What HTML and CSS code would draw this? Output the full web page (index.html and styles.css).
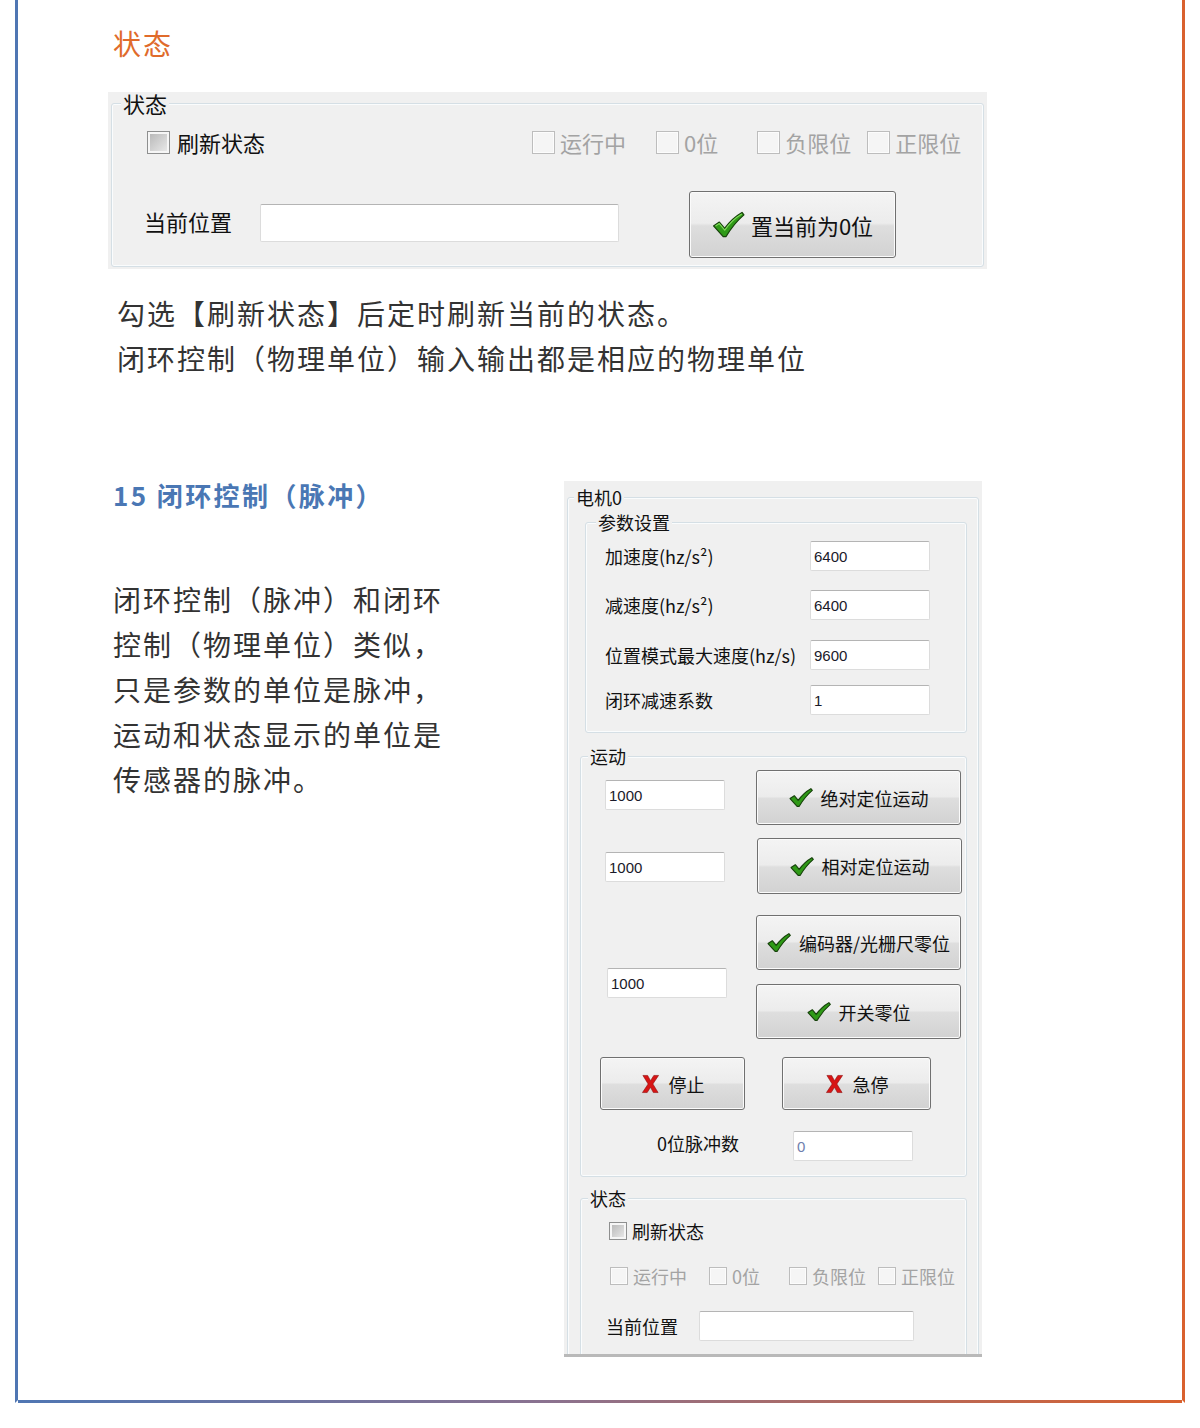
FILE: index.html
```html
<!DOCTYPE html>
<html lang="zh-CN">
<head>
<meta charset="utf-8">
<title>闭环控制（脉冲）</title>
<link rel="stylesheet" href="styles.css">
</head>
<body>
<div class="frame">
  <div class="content">
    <h2 class="title-orange">状态</h2>

    <div class="win win-status">
      <fieldset class="grp grp-lg">
        <legend>状态</legend>
        <div class="st-row1">
          <div class="chk"><span class="box box-on"></span><span>刷新状态</span></div>
          <div class="flags">
            <div class="chk dis f1"><span class="box"></span><span>运行中</span></div>
            <div class="chk dis f2"><span class="box"></span><span>0位</span></div>
            <div class="chk dis f3"><span class="box"></span><span>负限位</span></div>
            <div class="chk dis f4"><span class="box"></span><span>正限位</span></div>
          </div>
        </div>
        <div class="st-row2">
          <span class="lbl">当前位置</span>
          <span class="inp inp-wide"></span>
          <div class="btn btn-lg">
            <svg class="ico-check-lg" viewBox="0 0 34 28"><path d="M1.5 15.5 L7.5 11.5 L13 18 C18 11 24 5.5 31 1.5 L33 4 C26 10 19.5 18 14.5 26.5 L11.5 26.5 Z" fill="#2f9a17" stroke="#17420b" stroke-width="1.3" stroke-linejoin="round"/><path d="M3.5 15.6 L7.4 13 L13.1 19.8 C18.5 12 24 7 30.8 3" fill="none" stroke="#7fd85a" stroke-width="1.2"/></svg>
            <span>置当前为0位</span>
          </div>
        </div>
      </fieldset>
    </div>

    <p class="para para-top">勾选【刷新状态】后定时刷新当前的状态。<br>闭环控制（物理单位）输入输出都是相应的物理单位</p>

    <div class="sec">
      <div class="sec-left">
        <h2 class="title-blue">15 闭环控制（脉冲）</h2>
        <p class="para para-left">闭环控制（脉冲）和闭环控制（物理单位）类似，只是参数的单位是脉冲，运动和状态显示的单位是传感器的脉冲。</p>
      </div>

      <div class="win win-motor">
        <fieldset class="grp grp-motor">
          <legend>电机0</legend>

          <fieldset class="grp grp-param">
            <legend>参数设置</legend>
            <div class="prow pr1"><span class="plbl">加速度(hz/s²)</span><span class="inp inp-s">6400</span></div>
            <div class="prow pr2"><span class="plbl">减速度(hz/s²)</span><span class="inp inp-s">6400</span></div>
            <div class="prow pr3"><span class="plbl">位置模式最大速度(hz/s)</span><span class="inp inp-s">9600</span></div>
            <div class="prow pr4"><span class="plbl">闭环减速系数</span><span class="inp inp-s">1</span></div>
          </fieldset>

          <fieldset class="grp grp-move">
            <legend>运动</legend>
            <div class="move-top">
              <div class="mcol-in">
                <span class="inp inp-s mi1">1000</span>
                <span class="inp inp-s mi2">1000</span>
                <span class="inp inp-s mi3">1000</span>
              </div>
              <div class="mcol-btn">
                <div class="btn btn-m mb1"><svg class="ico-check" viewBox="0 0 34 28"><path d="M1.5 15.5 L7.5 11.5 L13 18 C18 11 24 5.5 31 1.5 L33 4 C26 10 19.5 18 14.5 26.5 L11.5 26.5 Z" fill="#2f9a17" stroke="#17420b" stroke-width="1.6" stroke-linejoin="round"/></svg><span>绝对定位运动</span></div>
                <div class="btn btn-m mb2"><svg class="ico-check" viewBox="0 0 34 28"><path d="M1.5 15.5 L7.5 11.5 L13 18 C18 11 24 5.5 31 1.5 L33 4 C26 10 19.5 18 14.5 26.5 L11.5 26.5 Z" fill="#2f9a17" stroke="#17420b" stroke-width="1.6" stroke-linejoin="round"/></svg><span>相对定位运动</span></div>
                <div class="btn btn-m mb3"><svg class="ico-check" viewBox="0 0 34 28"><path d="M1.5 15.5 L7.5 11.5 L13 18 C18 11 24 5.5 31 1.5 L33 4 C26 10 19.5 18 14.5 26.5 L11.5 26.5 Z" fill="#2f9a17" stroke="#17420b" stroke-width="1.6" stroke-linejoin="round"/></svg><span>编码器/光栅尺零位</span></div>
                <div class="btn btn-m mb4"><svg class="ico-check" viewBox="0 0 34 28"><path d="M1.5 15.5 L7.5 11.5 L13 18 C18 11 24 5.5 31 1.5 L33 4 C26 10 19.5 18 14.5 26.5 L11.5 26.5 Z" fill="#2f9a17" stroke="#17420b" stroke-width="1.6" stroke-linejoin="round"/></svg><span>开关零位</span></div>
              </div>
            </div>
            <div class="move-stop">
              <div class="btn btn-stop"><svg class="ico-x" viewBox="0 0 20 20"><path d="M2 1 H7 L10 6.5 L13.5 1 H18.5 L12.5 10 L18 19 H13 L10 13.5 L6.5 19 H1.5 L7.5 10 Z" fill="#d71515" stroke="#8a0b0b" stroke-width="0.6"/></svg><span>停止</span></div>
              <div class="btn btn-estop"><svg class="ico-x" viewBox="0 0 20 20"><path d="M2 1 H7 L10 6.5 L13.5 1 H18.5 L12.5 10 L18 19 H13 L10 13.5 L6.5 19 H1.5 L7.5 10 Z" fill="#d71515" stroke="#8a0b0b" stroke-width="0.6"/></svg><span>急停</span></div>
            </div>
            <div class="move-pulse">
              <span class="pulse-lbl">0位脉冲数</span>
              <span class="inp inp-s inp-ro">0</span>
            </div>
          </fieldset>

          <fieldset class="grp grp-st2">
            <legend>状态</legend>
            <div class="s2-row1">
              <div class="chk chk-sm"><span class="box box-on"></span><span>刷新状态</span></div>
            </div>
            <div class="s2-row2">
              <div class="chk chk-sm dis g1"><span class="box"></span><span>运行中</span></div>
              <div class="chk chk-sm dis g2"><span class="box"></span><span>0位</span></div>
              <div class="chk chk-sm dis g3"><span class="box"></span><span>负限位</span></div>
              <div class="chk chk-sm dis g4"><span class="box"></span><span>正限位</span></div>
            </div>
            <div class="s2-row3">
              <span class="s2-lbl">当前位置</span>
              <span class="inp inp-pos"></span>
            </div>
          </fieldset>
        </fieldset>
      </div>
    </div>
  </div>
</div>
</body>
</html>
```

FILE: styles.css
```css
html, body {
  margin: 0;
  padding: 0;
  background: #ffffff;
}

body {
  font-family: "Noto Sans CJK SC", "Noto Sans", sans-serif;
  color: #333333;
}

.frame {
  margin-left: 15px;
  width: 1170px;
  height: 1403px;
  box-sizing: border-box;
  border-left: 3px solid #4f76b3;
  border-right: 3px solid #d9612e;
  border-bottom: 3px solid transparent;
  background:
    linear-gradient(#ffffff, #ffffff) padding-box,
    linear-gradient(90deg, #4f76b3, #8a7290 45%, #d9612e) border-box;
}

.content {
  padding-left: 90px;
}

.title-orange {
  margin: 0;
  padding: 23px 0 0 5px;
  font-size: 28px;
  line-height: 40px;
  letter-spacing: 2px;
  font-weight: normal;
  color: #e06b2b;
}

.title-blue {
  margin: 0;
  font-size: 26px;
  line-height: 40px;
  letter-spacing: 2.4px;
  font-weight: bold;
  color: #4a77b4;
}

.para {
  margin: 0;
  font-size: 28px;
  line-height: 45px;
  letter-spacing: 2px;
  color: #333333;
}

.para-top {
  margin-top: 22px;
  padding-left: 9px;
}

.para-left {
  margin-top: 62px;
  width: 340px;
}

.sec {
  display: flex;
  align-items: flex-start;
  margin-top: 94px;
}

.sec-left {
  width: 456px;
  box-sizing: border-box;
  padding-left: 5px;
}

/* ---------- window panels ---------- */

.win {
  background: #f0f0f0;
  box-sizing: border-box;
  color: #111111;
}

.grp {
  margin: 0;
  padding: 0;
  min-width: 0;
  border: 1px solid #d5dfe5;
  border-radius: 3px;
  box-shadow: inset 0 0 0 1px #fafcfd;
}

.grp > legend {
  padding: 0 2px;
  background: #f0f0f0;
  color: #111111;
}

.inp {
  display: flex;
  align-items: center;
  box-sizing: border-box;
  background: #ffffff;
  border: 1px solid #dcdcdc;
  border-top-color: #b4b4b4;
  border-radius: 2px;
  font-family: "Liberation Sans", "DejaVu Sans", sans-serif;
  font-size: 15px;
  color: #1a1a2a;
  padding-left: 3px;
}

.btn {
  display: flex;
  align-items: center;
  justify-content: center;
  box-sizing: border-box;
  border: 1px solid #707070;
  border-radius: 3px;
  background: linear-gradient(#f4f4f4 0%, #ececec 48%, #dedede 52%, #d2d2d2 100%);
  box-shadow: inset 0 0 0 1px #fbfbfb;
  color: #111111;
}

.chk {
  display: flex;
  align-items: center;
  gap: 5px;
}

.box {
  display: block;
  box-sizing: border-box;
  width: 23px;
  height: 23px;
  border: 1px solid #bdbdbd;
  background: #f5f5f5;
  box-shadow: inset 0 0 0 1px #fcfcfc;
}

.box-on {
  border-color: #8e8f8f;
  background: linear-gradient(135deg, #b4b4b4, #ededed);
  box-shadow: inset 0 0 0 2px #f6f6f6;
}

.dis {
  color: #a3a3a3;
}

/* ---------- panel 1: 状态 ---------- */

.win-status {
  width: 879px;
  height: 177px;
  margin-top: 29px;
  padding: 0 3px;
  font-size: 22px;
}

.grp-lg > legend {
  margin-left: 9px;
  font-size: 22px;
  line-height: 22px;
}

.st-row1 {
  display: flex;
  align-items: center;
  height: 30px;
  margin-top: 13px;
  padding-left: 35px;
}

.st-row1 > .chk {
  gap: 7px;
}

.flags {
  display: flex;
  align-items: center;
  margin-left: 267px;
}

.flags .f2 { margin-left: 30px; }
.flags .f3 { margin-left: 39px; }
.flags .f4 { margin-left: 16px; }

.st-row2 {
  display: flex;
  align-items: center;
  height: 67px;
  margin-top: 34px;
  margin-bottom: 8px;
  padding-left: 32px;
}

.lbl {
  margin-bottom: 8px;
}

.inp-wide {
  width: 359px;
  height: 38px;
  margin-left: 28px;
  margin-bottom: 3px;
}

.btn-lg {
  width: 207px;
  height: 67px;
  margin-left: 70px;
  gap: 6px;
  font-size: 22px;
}

.ico-check-lg {
  width: 33px;
  height: 27px;
}

/* ---------- panel 2: 电机0 ---------- */

.win-motor {
  width: 418px;
  height: 876px;
  margin-top: 6px;
  padding: 6px 3px 0;
  border-bottom: 3px solid #b9b9b9;
  overflow: hidden;
  font-size: 18px;
}

.grp-motor > legend {
  margin-left: 6px;
  font-size: 18px;
  line-height: 20px;
}

.grp-param,
.grp-move,
.grp-st2 {
  margin-right: 11px;
}

.grp-param > legend,
.grp-move > legend,
.grp-st2 > legend {
  font-size: 18px;
  line-height: 20px;
}

.grp-param {
  margin-top: 5px;
  margin-left: 17px;
  padding: 0 0 17px 19px;
}

.grp-param > legend {
  margin-left: -9px;
}

.prow {
  display: flex;
  align-items: center;
  height: 30px;
}

.pr1 { margin-top: 9px; }
.pr2 { margin-top: 19px; }
.pr3 { margin-top: 20px; }
.pr4 { margin-top: 15px; }

.plbl {
  width: 205px;
  white-space: nowrap;
}

.inp-s {
  width: 120px;
  height: 30px;
}

.grp-move {
  margin-top: 13px;
  margin-left: 12px;
  padding: 0 0 14px 0;
}

.grp-move > legend,
.grp-st2 > legend {
  margin-left: 7px;
}

.move-top {
  display: flex;
  align-items: flex-start;
}

.mcol-in {
  display: flex;
  flex-direction: column;
  padding-left: 24px;
  width: 122px;
}

.mi1 { margin-top: 14px; }
.mi2 { margin-top: 42px; }
.mi3 { margin-top: 86px; margin-left: 2px; }

.mcol-btn {
  display: flex;
  flex-direction: column;
  margin-left: 29px;
}

.btn-m {
  width: 205px;
  height: 55px;
  gap: 8px;
  font-size: 18px;
}

.mb1 { margin-top: 4px; }
.mb2 { margin-top: 13px; margin-left: 1px; height: 56px; }
.mb3 { margin-top: 21px; }
.mb4 { margin-top: 14px; }

.ico-check {
  width: 24px;
  height: 21px;
}

.move-stop {
  display: flex;
  margin-top: 18px;
  padding-left: 19px;
}

.btn-stop,
.btn-estop {
  height: 53px;
  gap: 9px;
  font-size: 18px;
}

.btn-stop { width: 145px; }
.btn-estop { width: 149px; margin-left: 37px; }

.ico-x {
  width: 19px;
  height: 20px;
}

.move-pulse {
  display: flex;
  align-items: center;
  margin-top: 20px;
}

.pulse-lbl {
  width: 136px;
  margin-left: 76px;
  margin-bottom: 6px;
}

.inp-ro {
  color: #6f7fae;
}

.grp-st2 {
  margin-top: 11px;
  margin-left: 12px;
  padding: 0 0 30px 0;
}

.chk-sm .box {
  width: 18px;
  height: 18px;
}

.s2-row1 {
  display: flex;
  align-items: center;
  height: 20px;
  margin-top: 13px;
  padding-left: 28px;
}

.s2-row2 {
  display: flex;
  align-items: center;
  height: 20px;
  margin-top: 25px;
  padding-left: 29px;
}

.s2-row2 .g2 { margin-left: 22px; }
.s2-row2 .g3 { margin-left: 29px; }
.s2-row2 .g4 { margin-left: 12px; }

.s2-row3 {
  display: flex;
  align-items: center;
  height: 30px;
  margin-top: 25px;
  padding-left: 25px;
}

.s2-lbl {
  width: 93px;
}

.inp-pos {
  width: 215px;
  height: 30px;
}
```
